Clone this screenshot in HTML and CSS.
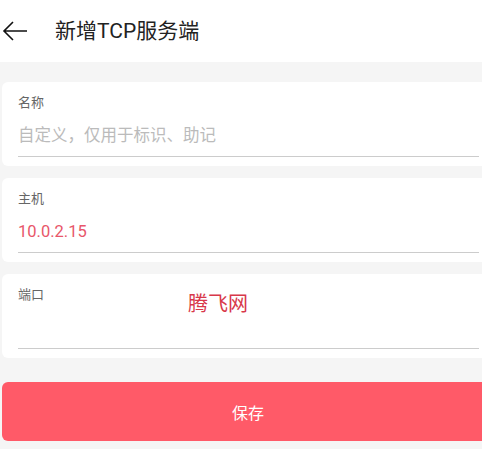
FILE: index.html
```html
<!DOCTYPE html>
<html lang="zh-CN">
<head>
    <meta charset="UTF-8">
    <meta name="viewport" content="width=device-width, initial-scale=1.0">
    <title>新增TCP服务端</title>
    <link rel="stylesheet" href="styles.css">
</head>
<body>
    <div class="header">
        <button class="back" aria-label="返回">
            <svg width="26" height="22" viewBox="0 0 26 22">
                <path d="M25 11H2M11 2L2 11L11 20" fill="none" stroke="#111" stroke-width="1.6"/>
            </svg>
        </button>
        <h1>新增TCP服务端</h1>
    </div>

    <div class="content">
        <div class="card">
            <label class="label">名称</label>
            <div class="field placeholder">自定义，仅用于标识、助记</div>
        </div>

        <div class="card">
            <label class="label">主机</label>
            <div class="field value">10.0.2.15</div>
        </div>

        <div class="card">
            <label class="label">端口</label>
            <div class="field"></div>
            <!-- watermark -->
            <span class="mark">腾飞网</span>
        </div>

        <button class="save">保存</button>
    </div>
</body>
</html>
```

FILE: styles.css
```css
body {
    margin: 0;
    padding: 0;
    font-family: Roboto, "Noto Sans CJK SC", sans-serif;
    background-color: #f5f5f5;
    width: 482px;
    height: 449px;
    overflow: hidden;
}

/* Header */
.header {
    height: 62px;
    background-color: #fff;
    display: flex;
    align-items: center;
}

.back {
    border: none;
    background: none;
    padding: 0;
    margin-left: 2px;
    width: 26px;
    height: 22px;
    display: flex;
}

.header h1 {
    margin: 0 0 0 27px;
    font-size: 21px;
    font-weight: normal;
    color: #222;
    line-height: 1;
}

.content {
    padding-top: 20px;
}

/* Form cards */
.card {
    position: relative;
    box-sizing: border-box;
    width: 492px;
    height: 84px;
    margin: 0 0 12px 2px;
    padding: 12px 15px 0 16px;
    background-color: #fff;
    border-radius: 6px;
}

.label {
    display: block;
    font-size: 13px;
    line-height: 18px;
    color: #666;
}

.field {
    height: 40px;
    margin-top: 4px;
    font-size: 16.5px;
    line-height: 40px;
    border-bottom: 1px solid #ccc;
}

.placeholder {
    color: #bbb;
}

.value {
    color: #e8566a;
}

.mark {
    position: absolute;
    left: 186px;
    top: 14px;
    font-size: 20px;
    color: #d8384a;
}

/* Save button */
.save {
    display: block;
    width: 492px;
    height: 59px;
    margin: 24px 0 0 2px;
    border: none;
    border-radius: 6px;
    background-color: #ff5a68;
    color: #fff;
    font-family: inherit;
    font-size: 16px;
}
```
